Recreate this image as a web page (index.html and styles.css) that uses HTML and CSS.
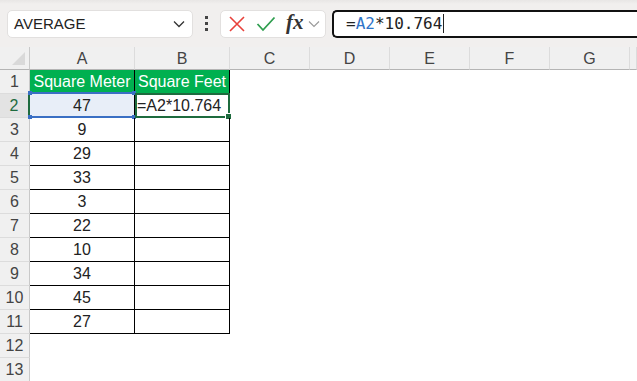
FILE: index.html
```html
<!DOCTYPE html>
<html>
  <head>
    <link rel="stylesheet" href="styles.css">
  </head>
  <body>
    <div class="toolbar">
      <div class="namebox">
        <span class="namebox-text">AVERAGE</span>
        <svg class="chevron" width="12" height="8" viewBox="0 0 12 8"><path d="M1 1.5 L6 6.5 L11 1.5" fill="none" stroke="#333" stroke-width="1.3"/></svg>
      </div>
      <div class="dots"><i></i><i></i><i></i></div>
      <div class="fxbox">
        <svg width="18" height="18" viewBox="0 0 18 18"><path d="M2 2 L16 16 M16 2 L2 16" stroke="#e8413b" stroke-width="1.6"/></svg>
        <svg width="20" height="18" viewBox="0 0 20 18"><path d="M1.5 9 L7 15 L18.5 2.5" fill="none" stroke="#2f9e4f" stroke-width="1.8"/></svg>
        <span class="fx">fx</span>
        <svg width="12" height="8" viewBox="0 0 12 8"><path d="M1 1.5 L6 6.5 L11 1.5" fill="none" stroke="#999" stroke-width="1.1"/></svg>
      </div>
      <div class="formula">=<span class="ref">A2</span>*10.764<span class="caret"></span></div>
    </div>

    <div class="sheet">
      <div class="corner"><span class="tri"></span></div>
      <div class="colhead">A</div>
      <div class="colhead">B</div>
      <div class="colhead">C</div>
      <div class="colhead">D</div>
      <div class="colhead">E</div>
      <div class="colhead">F</div>
      <div class="colhead">G</div>
      <div class="colhead"></div>
    </div>

    <script>
      let sheet = document.querySelector(".sheet");
      let meters = [47, 9, 29, 33, 3, 22, 10, 34, 45, 27];

      function cell(cls, text) {
        let node = document.createElement("div");
        node.className = cls;
        if (text !== undefined) node.textContent = text;
        sheet.appendChild(node);
        return node;
      }

      for (let r = 1; r <= 13; r++) {
        cell(r === 2 ? "rowhead rowhead_active" : "rowhead", r);
        if (r === 1) {
          cell("data data_head", "Square Meter");
          cell("data data_head", "Square Feet");
        } else if (r <= 11) {
          let a = cell(r === 2 ? "data data_num data_range" : "data data_num", meters[r - 2]);
          let b = cell(r === 2 ? "data data_active" : "data", r === 2 ? "=A2*10.764" : "");
          if (r === 2) {
            a.innerHTML += '<span class="range-box"><i class="h tl"></i><i class="h tr"></i><i class="h bl"></i><i class="h br"></i></span>';
            b.innerHTML += '<span class="active-box"><i class="fill"></i></span>';
          }
        } else {
          cell("grid");
          cell("grid");
        }
        for (let c = 0; c < 6; c++) cell("grid");
      }
    </script>
  </body>
</html>
```
FILE: styles.css
```css
html,
body {
  margin: 0;
  background: #ffffff;
  overflow: hidden;
}

body {
  width: 637px;
  height: 381px;
  font-family: "Liberation Sans", Arial, sans-serif;
  color: #222;
}

/* toolbar */

.toolbar {
  height: 47px;
  background: linear-gradient(#e8e6e5, #f1efee 4px);
  display: flex;
  align-items: center;
  padding: 0 0 0 7px;
  box-sizing: border-box;
}

.namebox {
  width: 186px;
  height: 28px;
  box-sizing: border-box;
  background: #fff;
  border: 1px solid #e2e0df;
  border-radius: 5px;
  display: flex;
  align-items: center;
  justify-content: space-between;
  padding: 0 7px 0 6px;
}

.namebox-text {
  font-size: 15px;
  color: #222;
}

.dots {
  width: 27px;
  display: flex;
  flex-direction: column;
  align-items: center;
  gap: 3px;
}

.dots i {
  width: 3px;
  height: 3px;
  background: #444;
}

.fxbox {
  width: 106px;
  height: 28px;
  box-sizing: border-box;
  background: #fff;
  border: 1px solid #e2e0df;
  border-radius: 5px;
  display: flex;
  align-items: center;
  padding: 0 3px 0 7px;
}

.fxbox svg:nth-child(2) {
  margin-left: 10px;
}

.fx {
  font-family: "Liberation Serif", "Times New Roman", serif;
  font-style: italic;
  font-weight: bold;
  font-size: 21px;
  color: #333;
  margin-left: 10px;
  margin-right: 4px;
  position: relative;
  top: -1px;
}

.formula {
  margin-left: 6px;
  flex: 1;
  height: 28px;
  box-sizing: border-box;
  border: 2px solid #111;
  border-right: none;
  border-radius: 5px 0 0 5px;
  background: #fff;
  font-family: "DejaVu Sans Mono", monospace;
  font-size: 16px;
  display: flex;
  align-items: center;
  padding-left: 12px;
  color: #222;
}

.ref {
  color: #2f74c8;
}

.caret {
  width: 1px;
  height: 19px;
  background: #222;
  margin-left: 1px;
}

/* sheet */

.sheet {
  display: grid;
  grid-template-columns: 30px 105px 95px repeat(5, 80px) 1fr;
  grid-template-rows: 23px repeat(13, 24px);
  font-size: 16px;
}

.corner {
  background: #f0f0f0;
  border-right: 1px solid #c9c9c9;
  border-bottom: 1px solid #b4b4b4;
  position: relative;
}

.tri {
  position: absolute;
  right: 4px;
  bottom: 4px;
  width: 0;
  height: 0;
  border-left: 13px solid transparent;
  border-bottom: 13px solid #d9d9d9;
}

.colhead {
  background: #f0f0f0;
  border-right: 1px solid #dcdcdc;
  border-bottom: 1px solid #b4b4b4;
  color: #444;
  display: flex;
  align-items: center;
  justify-content: center;
  font-size: 16px;
  padding-top: 1px;
}

.rowhead {
  background: #f0f0f0;
  border-right: 1px solid #c9c9c9;
  border-bottom: 1px solid #dcdcdc;
  color: #444;
  display: flex;
  align-items: center;
  justify-content: center;
  font-size: 16px;
}

.rowhead_active {
  color: #1e6b3e;
  border-right: 2px solid #1e6b3e;
  background: #e3e3e3;
}

.grid {
  background: #fff;
}

.data {
  border-right: 1px solid #000;
  border-bottom: 1px solid #000;
  display: flex;
  align-items: center;
  padding: 0 2px;
  position: relative;
  white-space: nowrap;
}

.data_head {
  background: #00b050;
  color: #fff;
  justify-content: center;
}

.data_num {
  justify-content: center;
}

.data_range {
  background: #e8eef8;
}

.range-box {
  position: absolute;
  left: -2px;
  top: -2px;
  right: -1px;
  bottom: -1px;
  border-top: 2px solid #3a6fc4;
  border-bottom: 2px solid #3a6fc4;
}

.h {
  position: absolute;
  width: 4px;
  height: 4px;
  background: #3a6fc4;
}

.tl { left: 0; top: -3px; }
.tr { right: -1px; top: -3px; }
.bl { left: 0; bottom: -3px; }
.br { right: -1px; bottom: -3px; }

.active-box {
  position: absolute;
  left: 0;
  top: -1px;
  right: -1px;
  bottom: -1px;
  border: 2px solid #1e6b3e;
}

.fill {
  position: absolute;
  right: -4px;
  bottom: -4px;
  width: 5px;
  height: 5px;
  background: #1e6b3e;
  border: 1px solid #fff;
}
```
